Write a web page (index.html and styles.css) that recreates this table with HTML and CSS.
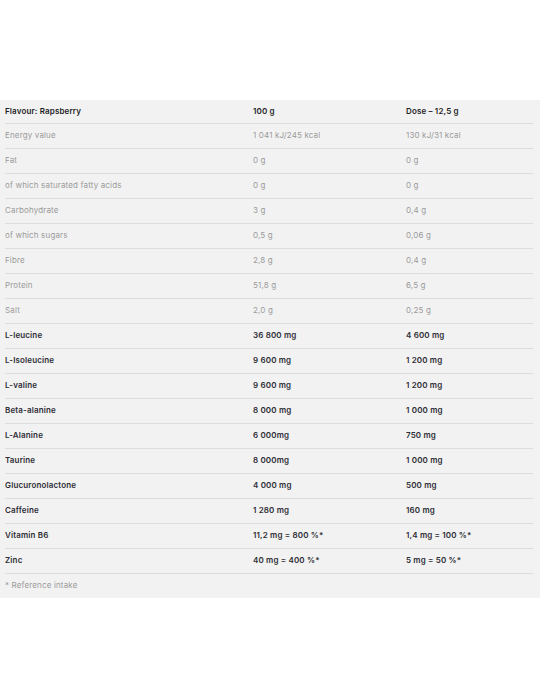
FILE: index.html
```html
<!DOCTYPE html>
<html lang="en">
<head>
<meta charset="utf-8">
<title>Nutrition facts</title>
<link rel="stylesheet" href="styles.css">
</head>
<body>
<section class="panel">
  <div class="row head"><div>Flavour: Rapsberry</div><div>100 g</div><div>Dose – 12,5 g</div></div>
  <div class="row light"><div>Energy value</div><div>1 041 kJ/245 kcal</div><div>130 kJ/31 kcal</div></div>
  <div class="row light"><div>Fat</div><div>0 g</div><div>0 g</div></div>
  <div class="row light"><div>of which saturated fatty acids</div><div>0 g</div><div>0 g</div></div>
  <div class="row light"><div>Carbohydrate</div><div>3 g</div><div>0,4 g</div></div>
  <div class="row light"><div>of which sugars</div><div>0,5 g</div><div>0,06 g</div></div>
  <div class="row light"><div>Fibre</div><div>2,8 g</div><div>0,4 g</div></div>
  <div class="row light"><div>Protein</div><div>51,8 g</div><div>6,5 g</div></div>
  <div class="row light"><div>Salt</div><div>2,0 g</div><div>0,25 g</div></div>
  <div class="row bold"><div>L-leucine</div><div>36 800 mg</div><div>4 600 mg</div></div>
  <div class="row bold"><div>L-Isoleucine</div><div>9 600 mg</div><div>1 200 mg</div></div>
  <div class="row bold"><div>L-valine</div><div>9 600 mg</div><div>1 200 mg</div></div>
  <div class="row bold"><div>Beta-alanine</div><div>8 000 mg</div><div>1 000 mg</div></div>
  <div class="row bold"><div>L-Alanine</div><div>6 000mg</div><div>750 mg</div></div>
  <div class="row bold"><div>Taurine</div><div>8 000mg</div><div>1 000 mg</div></div>
  <div class="row bold"><div>Glucuronolactone</div><div>4 000 mg</div><div>500 mg</div></div>
  <div class="row bold"><div>Caffeine</div><div>1 280 mg</div><div>160 mg</div></div>
  <div class="row bold"><div>Vitamin B6</div><div>11,2 mg = 800 %*</div><div>1,4 mg = 100 %*</div></div>
  <div class="row bold"><div>Zinc</div><div>40 mg = 400 %*</div><div>5 mg = 50 %*</div></div>
  <div class="row light note"><div>* Reference intake</div><div></div><div></div></div>
</section>
</body>
</html>
```

FILE: styles.css
```css
html, body {
  margin: 0;
  padding: 0;
  background: #ffffff;
}

body {
  font-family: Inter, "Open Sans", "Liberation Sans", sans-serif;
  font-size: 8px;
}

.panel {
  margin-top: 100px;
  background: #f2f2f2;
  padding: 0 7px 0 5px;
}

.row {
  display: grid;
  grid-template-columns: 248px 153px 1fr;
  align-items: center;
  height: 24px;
  box-sizing: border-box;
  padding-bottom: 2px;
  border-bottom: 1px solid #dedede;
  line-height: 10px;
  white-space: nowrap;
  letter-spacing: 0.15px;
}

.row.head {
  height: 24px;
  font-weight: 600;
  color: #1e1e28;
}

.row.light {
  height: 25px;
  font-weight: 400;
  color: #9a9a9a;
}

.row.bold {
  height: 25px;
  font-weight: 600;
  color: #2e2e36;
}

.row.note {
  height: 24px;
  border-bottom: none;
}
```
